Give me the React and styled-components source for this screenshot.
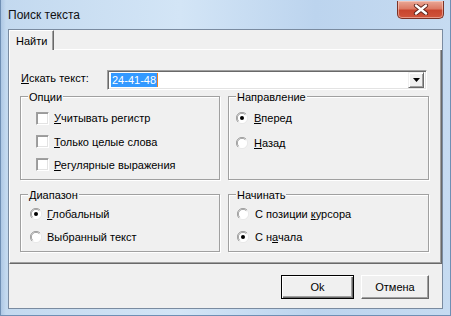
import styled, { createGlobalStyle } from "styled-components";

const Global = createGlobalStyle`
  html, body { margin: 0; padding: 0; background: #fff; }
  body { font-family: "Liberation Sans", Arial, sans-serif; font-size: 11px; color: #000; }
`;

const Window = styled.div`
  width: 451px;
  height: 316px;
  box-sizing: border-box;
  padding: 0 8px 7px 8px;
  display: flex;
  flex-direction: column;
  background: linear-gradient(90deg, #a9c4e2 0px, #c3d9ef 6px, #d3e5f6 40%, #bcd4ee 70%, #c6dbf1 100%);
  box-shadow: inset 1px 0 0 #6f8fb4, inset -1px 0 0 #6f8fb4, inset 0 -1px 0 #6f8fb4;
`;

const TitleBar = styled.div`
  height: 29px;
  display: flex;
  align-items: flex-start;
  flex-shrink: 0;
`;

const Title = styled.div`
  font-size: 12px;
  color: #111;
  padding-top: 8px;
  flex: 1;
`;

const CloseButton = styled.div`
  width: 47px;
  height: 18px;
  margin-top: 1px;
  margin-right: -1px;
  box-sizing: border-box;
  border: 1px solid #7b3226;
  border-top: none;
  border-radius: 0 0 5px 5px;
  background: linear-gradient(180deg, #e9a897 0%, #dc7a64 45%, #c8452e 55%, #d0553c 100%);
  box-shadow: inset 0 0 0 1px rgba(255, 220, 210, 0.5);
  display: flex;
  align-items: center;
  justify-content: center;
`;

const Client = styled.div`
  flex: 1;
  display: flex;
  flex-direction: column;
  background: #f0f0f0;
  border: 1px solid #7a8ba0;
`;

const TabStrip = styled.div`
  display: flex;
  height: 20px;
`;

const Tab = styled.div`
  width: 45px;
  height: 20px;
  box-sizing: border-box;
  border-top: 1px solid #fff;
  border-left: 1px solid #fff;
  border-right: 1px solid #696969;
  box-shadow: inset -1px 0 0 #a0a0a0;
  padding: 4px 0 0 6px;
`;

const TabRest = styled.div`
  flex: 1;
  border-bottom: 1px solid #fff;
  align-self: flex-end;
  height: 0;
`;

const Panel = styled.div`
  height: 214px;
  box-sizing: border-box;
  border-left: 1px solid #fff;
  border-right: 1px solid #696969;
  border-bottom: 1px solid #696969;
  box-shadow: inset -1px -1px 0 #a0a0a0;
  padding: 20px 13px 0 10px;
`;

const SearchRow = styled.div`
  display: flex;
  align-items: center;
  height: 20px;
`;

const FieldLabel = styled.label`
  width: 87px;
  padding-left: 1px;
  margin-top: -4px;
  box-sizing: border-box;
`;

const Combo = styled.div`
  width: 320px;
  height: 20px;
  box-sizing: border-box;
  border: 1px solid;
  border-color: #a0a0a0 #fff #fff #a0a0a0;
  box-shadow: inset 1px 1px 0 #696969, inset -1px -1px 0 #e3e3e3;
  background: #fff;
  display: flex;
  align-items: center;
  padding: 2px 2px 2px 3px;
`;

const Selected = styled.span`
  background: #3399ff;
  color: #fff;
  padding: 0 1px;
  line-height: 14px;
  border-right: 1px solid #f08020;
`;

const DropButton = styled.div`
  margin-left: auto;
  width: 16px;
  height: 16px;
  box-sizing: border-box;
  background: #f0f0f0;
  border: 1px solid;
  border-color: #f0f0f0 #696969 #696969 #f0f0f0;
  box-shadow: inset 1px 1px 0 #fff, inset -1px -1px 0 #a0a0a0;
  display: flex;
  align-items: center;
  justify-content: center;
`;

const Groups = styled.div`
  display: grid;
  grid-template-columns: 200px 201px;
  grid-template-rows: 84px 58px;
  column-gap: 8px;
  row-gap: 14px;
  margin-top: 6px;
`;

const GroupBox = styled.div`
  position: relative;
  border: 1px solid #a0a0a0;
  box-shadow: inset 1px 1px 0 #fff, 1px 1px 0 #fff;
  padding: ${(p) => p.$top}px 0 0 ${(p) => p.$left}px;
  display: flex;
  flex-direction: column;
`;

const Caption = styled.span`
  position: absolute;
  top: -7px;
  left: 7px;
  padding: 0 1px;
  background: #f0f0f0;
  line-height: 14px;
`;

const Row = styled.label`
  display: flex;
  align-items: center;
  gap: ${(p) => p.$gap}px;
  height: ${(p) => p.$h}px;
`;

const CheckBox = styled.span`
  width: 13px;
  height: 13px;
  box-sizing: border-box;
  border: 1px solid;
  border-color: #a0a0a0 #fff #fff #a0a0a0;
  box-shadow: inset 1px 1px 0 #9a9a9a, inset -1px -1px 0 #e3e3e3;
  background: #fff;
  flex-shrink: 0;
`;

const Key = styled.u`
  text-decoration: underline;
  text-underline-offset: 1px;
`;

const ButtonBar = styled.div`
  flex: 1;
  display: flex;
  justify-content: flex-end;
  align-items: flex-start;
  gap: 7px;
  padding: 11px 13px 0 0;
`;

const Button = styled.div`
  width: ${(p) => p.$w}px;
  height: 24px;
  box-sizing: border-box;
  border: 1px solid;
  border-color: ${(p) => (p.$default ? "#000" : "#fff #696969 #696969 #fff")};
  box-shadow: ${(p) =>
    p.$default
      ? "inset 1px 1px 0 #fff, inset -1px -1px 0 #696969, inset -2px -2px 0 #a0a0a0"
      : "inset -1px -1px 0 #a0a0a0"};
  background: #f0f0f0;
  display: flex;
  align-items: center;
  justify-content: center;
`;

function Radio({ checked }) {
  return (
    <svg width="12" height="12" viewBox="0 0 12 12" style={{ flexShrink: 0 }}>
      <circle cx="6" cy="6" r="5.5" fill="#fff" />
      <path d="M10 2 A5.5 5.5 0 0 0 2 10" stroke="#a0a0a0" fill="none" />
      <path d="M9.3 2.7 A4.6 4.6 0 0 0 2.7 9.3" stroke="#8a8a8a" fill="none" strokeWidth="0.8" />
      <path d="M2 10 A5.5 5.5 0 0 0 10 2" stroke="#e8e8e8" fill="none" />
      {checked && <circle cx="6" cy="6" r="2" fill="#000" />}
    </svg>
  );
}

function CloseGlyph() {
  return (
    <svg width="16" height="11" viewBox="0 0 16 11">
      <path d="M3 1.5 L13 9.5 M13 1.5 L3 9.5" stroke="#5a2018" strokeWidth="4.2" strokeLinecap="round" />
      <path d="M3 1.5 L13 9.5 M13 1.5 L3 9.5" stroke="#fff" strokeWidth="2.4" strokeLinecap="round" />
    </svg>
  );
}

function Arrow() {
  return (
    <svg width="7" height="4" viewBox="0 0 7 4">
      <path d="M0 0 H7 L3.5 4 Z" fill="#000" />
    </svg>
  );
}

export default function App() {
  return (
    <>
      <Global />
      <Window>
        <TitleBar>
          <Title>Поиск текста</Title>
          <CloseButton>
            <CloseGlyph />
          </CloseButton>
        </TitleBar>
        <Client>
          <TabStrip>
            <Tab>Найти</Tab>
            <TabRest />
          </TabStrip>
          <Panel>
            <SearchRow>
              <FieldLabel>
                <Key>И</Key>скать текст:
              </FieldLabel>
              <Combo>
                <Selected>24-41-48</Selected>
                <DropButton>
                  <Arrow />
                </DropButton>
              </Combo>
            </SearchRow>
            <Groups>
              <GroupBox $top={9} $left={15}>
                <Caption>Опции</Caption>
                <Row $h={24} $gap={5}>
                  <CheckBox />
                  <span>
                    <Key>У</Key>читывать регистр
                  </span>
                </Row>
                <Row $h={23} $gap={5}>
                  <CheckBox />
                  <span>
                    <Key>Т</Key>олько целые слова
                  </span>
                </Row>
                <Row $h={23} $gap={5}>
                  <CheckBox />
                  <span>
                    <Key>Р</Key>егулярные выражения
                  </span>
                </Row>
              </GroupBox>
              <GroupBox $top={8} $left={7}>
                <Caption>Направление</Caption>
                <Row $h={25} $gap={6}>
                  <Radio checked />
                  <span>
                    <Key>В</Key>перед
                  </span>
                </Row>
                <Row $h={25} $gap={6}>
                  <Radio />
                  <span>
                    <Key>Н</Key>азад
                  </span>
                </Row>
              </GroupBox>
              <GroupBox $top={7} $left={9}>
                <Caption>Диапазон</Caption>
                <Row $h={23} $gap={5}>
                  <Radio checked />
                  <span>
                    <Key>Г</Key>лобальный
                  </span>
                </Row>
                <Row $h={23} $gap={5}>
                  <Radio />
                  <span>Выбранный текст</span>
                </Row>
              </GroupBox>
              <GroupBox $top={7} $left={8}>
                <Caption>Начинать</Caption>
                <Row $h={23} $gap={6}>
                  <Radio />
                  <span>
                    С позиции <Key>к</Key>урсора
                  </span>
                </Row>
                <Row $h={23} $gap={6}>
                  <Radio checked />
                  <span>
                    С н<Key>а</Key>чала
                  </span>
                </Row>
              </GroupBox>
            </Groups>
          </Panel>
          <ButtonBar>
            <Button $w={73} $default>
              Ok
            </Button>
            <Button $w={68}>Отмена</Button>
          </ButtonBar>
        </Client>
      </Window>
    </>
  );
}
